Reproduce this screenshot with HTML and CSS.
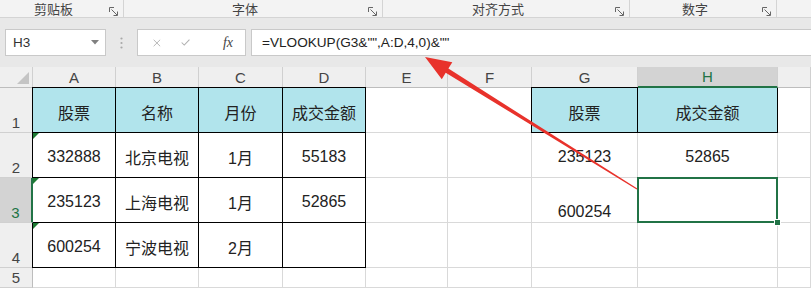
FILE: index.html
```html
<!DOCTYPE html>
<html>
<head>
     <title>VLOOKUP</title>
     <link rel="stylesheet" href="styles.css">
</head>
<body>

     <div class="ribbon">
          <div class="grp g1"><span class="lbl">剪贴板</span><svg class="launch" width="9" height="9" viewBox="0 0 9 9"><path d="M0.5 5V0.5H5M2.5 2.5L8 8M4.5 8.5H8.5V4.5" /></svg></div>
          <div class="grp g2"><span class="lbl">字体</span><svg class="launch" width="9" height="9" viewBox="0 0 9 9"><path d="M0.5 5V0.5H5M2.5 2.5L8 8M4.5 8.5H8.5V4.5" /></svg></div>
          <div class="grp g3"><span class="lbl">对齐方式</span><svg class="launch" width="9" height="9" viewBox="0 0 9 9"><path d="M0.5 5V0.5H5M2.5 2.5L8 8M4.5 8.5H8.5V4.5" /></svg></div>
          <div class="grp g4"><span class="lbl">数字</span><svg class="launch" width="9" height="9" viewBox="0 0 9 9"><path d="M0.5 5V0.5H5M2.5 2.5L8 8M4.5 8.5H8.5V4.5" /></svg></div>
     </div>

     <div class="fbar">
          <div class="namebox">
               <span>H3</span>
               <svg width="8" height="5" viewBox="0 0 8 5"><path d="M0 0H8L4 4.5Z" fill="#808080" /></svg>
          </div>
          <div class="dots">
               <svg width="3" height="12" viewBox="0 0 3 12"><circle cx="1.5" cy="1.5" r="1.1" /><circle cx="1.5" cy="6" r="1.1" /><circle cx="1.5" cy="10.5" r="1.1" /></svg>
          </div>
          <div class="fxbox">
               <svg width="12" height="12" viewBox="0 0 12 12"><path d="M1 1L11 11M11 1L1 11" stroke="#b0b0b0" stroke-width="1.4" /></svg>
               <svg width="14" height="11" viewBox="0 0 14 11"><path d="M1 5.5L5 9.5L13 1" stroke="#b0b0b0" stroke-width="1.6" fill="none" /></svg>
               <span class="fx">fx</span>
          </div>
          <div class="formula">=VLOOKUP(G3&amp;"",A:D,4,0)&amp;""</div>
     </div>

     <div class="sheet">
          <!-- column headers -->
          <div class="corner"></div>
          <div class="hd">A</div>
          <div class="hd">B</div>
          <div class="hd">C</div>
          <div class="hd">D</div>
          <div class="hd">E</div>
          <div class="hd">F</div>
          <div class="hd">G</div>
          <div class="hd on">H</div>
          <div class="hd"></div>

          <!-- row 1 -->
          <div class="rh">1</div>
          <div class="c cy bk btl">股票</div>
          <div class="c cy bk bt">名称</div>
          <div class="c cy bk bt">月份</div>
          <div class="c cy bk bt">成交金额</div>
          <div class="c"></div>
          <div class="c"></div>
          <div class="c cy bk btl">股票</div>
          <div class="c cy bk">成交金额</div>
          <div class="c"></div>

          <!-- row 2 -->
          <div class="rh">2</div>
          <div class="c bk bl err">332888</div>
          <div class="c bk">北京电视</div>
          <div class="c bk">1月</div>
          <div class="c bk">55183</div>
          <div class="c"></div>
          <div class="c"></div>
          <div class="c">235123</div>
          <div class="c">52865</div>
          <div class="c"></div>

          <!-- row 3 -->
          <div class="rh on">3</div>
          <div class="c bk err">235123</div>
          <div class="c bk">上海电视</div>
          <div class="c bk">1月</div>
          <div class="c bk">52865</div>
          <div class="c"></div>
          <div class="c"></div>
          <div class="c low">600254</div>
          <div class="c act"><span class="handle"></span></div>
          <div class="c"></div>

          <!-- row 4 -->
          <div class="rh">4</div>
          <div class="c bk bl err">600254</div>
          <div class="c bk">宁波电视</div>
          <div class="c bk">2月</div>
          <div class="c bk"></div>
          <div class="c"></div>
          <div class="c"></div>
          <div class="c"></div>
          <div class="c"></div>
          <div class="c"></div>

          <!-- row 5 -->
          <div class="rh">5</div>
          <div class="c"></div>
          <div class="c"></div>
          <div class="c"></div>
          <div class="c"></div>
          <div class="c"></div>
          <div class="c"></div>
          <div class="c"></div>
          <div class="c"></div>
          <div class="c"></div>
     </div>

     <svg class="arrow" width="811" height="288" viewBox="0 0 811 288">
          <polygon points="425,57 452.3,62.3 448.4,68.6 637.3,188.5 636.7,189.5 445.7,72.8 441.8,79.2" fill="#e8322b" />
     </svg>

</body>
</html>
```

FILE: styles.css
```css
body {
     margin: 0;
     width: 811px;
     height: 288px;
     overflow: hidden;
     position: relative;
     font-family: "Liberation Sans", "Noto Sans CJK SC", sans-serif;
     color: #222;
     background: #fff;
}

/* ribbon group labels */
.ribbon {
     display: flex;
     height: 17px;
     background: #f3f3f3;
     border-bottom: 1px solid #d4d4d4;
}

.grp {
     display: flex;
     align-items: center;
     border-right: 1px solid #d4d4d4;
}

.g1 { width: 123px; }
.g2 { width: 258px; }
.g3 { width: 246px; }
.g4 { width: 146px; }

.lbl {
     flex: 1;
     text-align: center;
     font-family: "Noto Sans CJK SC", sans-serif;
     font-size: 13px;
     line-height: 17px;
     color: #444;
}

.launch {
     margin: 5px 5px 0 2px;
     fill: none;
     stroke: #666;
     stroke-width: 1;
}

/* formula bar */
.fbar {
     display: flex;
     align-items: center;
     height: 49px;
     padding-left: 5px;
     background: #e8e8e8;
}

.namebox {
     display: flex;
     align-items: center;
     justify-content: space-between;
     box-sizing: border-box;
     width: 101px;
     height: 27px;
     padding: 0 6px 0 7px;
     background: #fff;
     border: 1px solid #c9c9c9;
     font-size: 13.5px;
     color: #333;
}

.dots {
     width: 31px;
     display: flex;
     justify-content: center;
     fill: #a8a8a8;
}

.fxbox {
     display: flex;
     align-items: center;
     box-sizing: border-box;
     width: 109px;
     height: 27px;
     padding: 0 12px 0 15px;
     gap: 20px;
     background: #fff;
     border: 1px solid #c9c9c9;
}

.fx {
     margin-left: 13px;
     font-family: "Liberation Serif", serif;
     font-style: italic;
     font-size: 14px;
     color: #444;
}

.formula {
     flex: 1;
     box-sizing: border-box;
     height: 27px;
     margin-left: 5px;
     padding-left: 10px;
     line-height: 25px;
     background: #fff;
     border: 1px solid #c9c9c9;
     border-right: 0;
     font-size: 13.6px;
     color: #222;
}

/* worksheet */
.sheet {
     display: grid;
     grid-template-columns: 33px 83px 83px 84px 83px 82px 84px 106px 140px 1fr;
     grid-template-rows: 21px 45px 45px 45px 45px 20px;
}

.corner {
     position: relative;
     background: #efefef;
     border-right: 1px solid #d0d0d0;
     border-bottom: 1px solid #bdbdbd;
}

.corner::after {
     content: "";
     position: absolute;
     right: 3px;
     bottom: 3px;
     border-left: 12px solid transparent;
     border-bottom: 12px solid #c4c4c4;
}

.hd {
     display: flex;
     align-items: center;
     justify-content: center;
     background: #efefef;
     border-right: 1px solid #d0d0d0;
     border-bottom: 1px solid #bdbdbd;
     font-size: 15px;
     color: #444;
}

.hd.on {
     background: #d3d3d3;
     color: #217346;
     border-bottom: 2px solid #217346;
}

.rh {
     display: flex;
     align-items: flex-end;
     justify-content: center;
     padding-bottom: 1px;
     background: #efefef;
     border-right: 1px solid #bdbdbd;
     border-bottom: 1px solid #d0d0d0;
     font-size: 15px;
     line-height: 17px;
     color: #444;
}

.rh.on {
     background: #d3d3d3;
     color: #217346;
     border-right: 2px solid #217346;
}

.c {
     position: relative;
     display: flex;
     align-items: center;
     justify-content: center;
     padding-top: 3px;
     border-right: 1px solid #d9d9d9;
     border-bottom: 1px solid #d9d9d9;
     font-size: 16px;
}

.c.low {
     align-items: flex-end;
     padding-bottom: 1px;
}

.cy { background: #b1e4ec; }

.bk {
     border-right-color: #000;
     border-bottom-color: #000;
}

.bl { box-shadow: -1px 0 0 #000; }
.bt { box-shadow: 0 -1px 0 #000; }
.btl { box-shadow: -1px 0 0 #000, 0 -1px 0 #000, -1px -1px 0 #000; }

.err::before {
     content: "";
     position: absolute;
     left: 0;
     top: 0;
     border-top: 6px solid #1d7a33;
     border-right: 6px solid transparent;
}

.act::after {
     content: "";
     position: absolute;
     left: -1px;
     top: -1px;
     right: -1px;
     bottom: -1px;
     border: 2px solid #217346;
}

.handle {
     position: absolute;
     right: -4px;
     bottom: -4px;
     width: 5px;
     height: 5px;
     background: #217346;
     border: 1px solid #fff;
     z-index: 1;
}

.arrow {
     position: absolute;
     left: 0;
     top: 0;
     pointer-events: none;
}
```
